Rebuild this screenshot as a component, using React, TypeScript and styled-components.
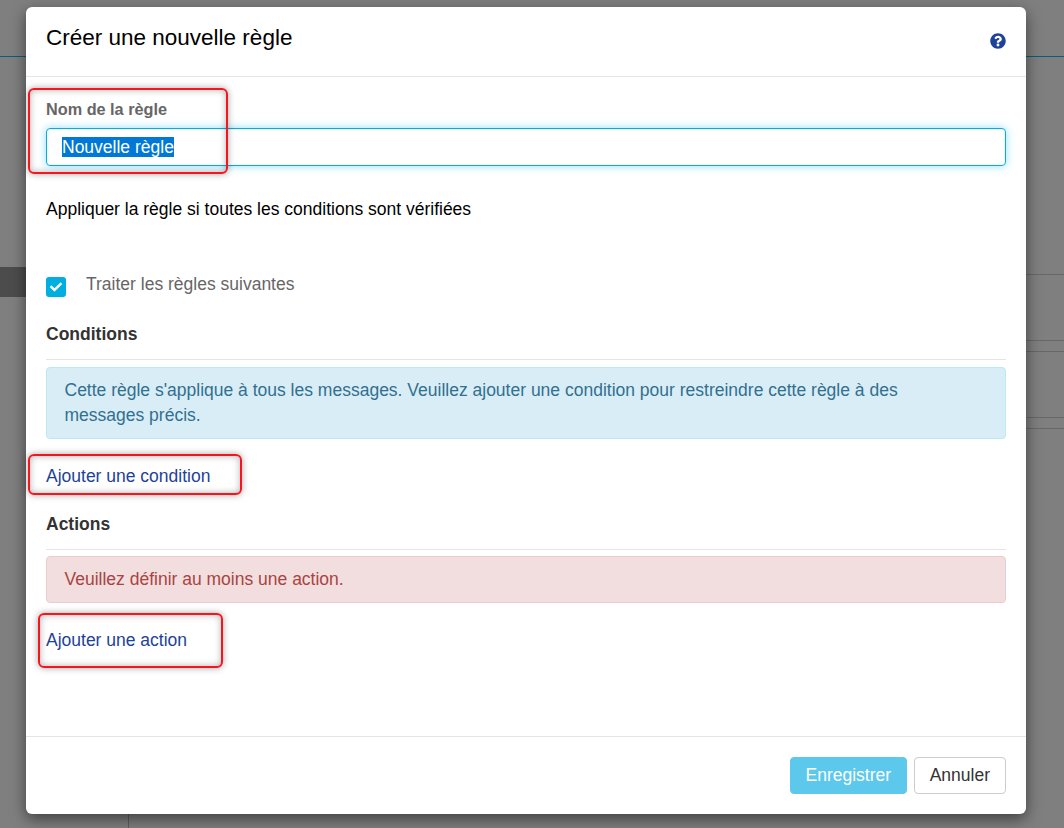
import React from "react";
import styled, { createGlobalStyle } from "styled-components";

const Global = createGlobalStyle`
  html, body { margin: 0; padding: 0; height: 100%; overflow: hidden; }
  body { font-family: "Liberation Sans", Arial, sans-serif; }
`;

const Page = styled.div`
  position: relative;
  width: 1064px;
  height: 828px;
  overflow: hidden;
  background: #7f7f7f;
`;

const TopBar = styled.div`
  height: 56px;
  border-bottom: 1px solid #04607c;
`;

const Columns = styled.div`
  display: flex;
  height: 771px;
`;

const SideNav = styled.div`
  width: 128px;
  flex: none;
  border-right: 1px solid #5e5e5e;
  padding-top: 210px;
`;

const ActiveNav = styled.div`
  height: 30px;
  background: #4c4c4c;
`;

const ListPane = styled.div`
  flex: 1;
  padding-top: 217px;
`;

const ListRow = styled.div<{ $h: number }>`
  height: ${(p) => p.$h}px;
  box-sizing: border-box;
  border-top: 1px solid #686868;
`;

const Modal = styled.div`
  position: absolute;
  left: 26px;
  top: 7px;
  width: 1000px;
  height: 807px;
  display: flex;
  flex-direction: column;
  background: #fff;
  border-radius: 6px;
  box-shadow: 0 5px 15px rgba(0, 0, 0, 0.5);
`;

const Header = styled.div`
  height: 70px;
  box-sizing: border-box;
  flex: none;
  display: flex;
  align-items: flex-start;
  justify-content: space-between;
  padding: 16px 20px 0;
  border-bottom: 1px solid #e5e5e5;
`;

const Title = styled.h4`
  margin: 0;
  font-size: 22.5px;
  font-weight: 400;
  line-height: 30px;
  color: #000;
`;

const HelpIcon = styled.svg`
  width: 16px;
  height: 16px;
  margin-top: 10px;
  fill: #1e4297;
`;

const Body = styled.div`
  flex: 1;
  padding: 23px 20px 0;
  display: flex;
  flex-direction: column;
  align-items: stretch;
`;

const FieldLabel = styled.label`
  font-size: 16.25px;
  font-weight: 700;
  line-height: 18px;
  color: #666;
  margin-bottom: 10px;
`;

const TextField = styled.div`
  height: 38px;
  box-sizing: border-box;
  padding: 0 15px;
  display: flex;
  align-items: center;
  border: 1px solid #00aee0;
  border-radius: 4px;
  box-shadow: inset 0 1px 1px rgba(0, 0, 0, 0.075), 0 0 8px rgba(102, 215, 250, 0.75);
  font-size: 17.5px;
  color: #555;
`;

const Selected = styled.span`
  background: #0078d7;
  color: #fff;
  line-height: 20px;
`;

const Sentence = styled.p`
  margin: 33px 0 0;
  font-size: 17.5px;
  line-height: 20px;
  color: #000;
`;

const CheckRow = styled.div`
  display: flex;
  align-items: center;
  gap: 20px;
  margin-top: 58px;
  height: 20px;
`;

const CheckBox = styled.span`
  width: 20px;
  height: 20px;
  flex: none;
  display: flex;
  align-items: center;
  justify-content: center;
  background: #00aee0;
  border-radius: 3px;
  svg { width: 12px; height: 12px; fill: #fff; }
`;

const CheckLabel = styled.span`
  font-size: 17.5px;
  line-height: 20px;
  color: #666;
  position: relative;
  top: -3px;
`;

const SectionTitle = styled.div<{ $top: number }>`
  margin-top: ${(p) => p.$top}px;
  padding-bottom: 15px;
  border-bottom: 1px solid #e5e5e5;
  font-size: 17.5px;
  font-weight: 700;
  line-height: 20px;
  color: #333;
`;

const Alert = styled.div<{ $tone: "info" | "danger"; $top: number }>`
  margin-top: ${(p) => p.$top}px;
  padding: 10px 44px 10px 17.5px;
  border: 1px solid ${(p) => (p.$tone === "info" ? "#bce8f1" : "#ebccd1")};
  border-radius: 4px;
  background: ${(p) => (p.$tone === "info" ? "#d9edf7" : "#f2dede")};
  color: ${(p) => (p.$tone === "info" ? "#31708f" : "#a94442")};
  font-size: 17.5px;
  line-height: 25px;
`;

const AddLink = styled.a<{ $top: number }>`
  display: block;
  margin-top: ${(p) => p.$top}px;
  font-size: 17.5px;
  line-height: 20px;
  color: #1e4297;
  text-decoration: none;
`;

const Footer = styled.div`
  height: 78px;
  box-sizing: border-box;
  flex: none;
  display: flex;
  justify-content: flex-end;
  gap: 7px;
  padding: 20px 20px 0;
  border-top: 1px solid #e5e5e5;
`;

const Button = styled.button<{ $primary?: boolean }>`
  height: 37px;
  box-sizing: border-box;
  padding: 0 ${(p) => (p.$primary ? "14.6px" : "15px")};
  font-family: inherit;
  font-size: 17.5px;
  border-radius: 4px;
  border: 1px solid ${(p) => (p.$primary ? "#5bc8ec" : "#ccc")};
  background: ${(p) => (p.$primary ? "#5bc8ec" : "#fff")};
  color: ${(p) => (p.$primary ? "#fff" : "#333")};
`;

const Callout = styled.div<{ $l: number; $t: number; $w: number; $h: number }>`
  position: absolute;
  left: ${(p) => p.$l}px;
  top: ${(p) => p.$t}px;
  width: ${(p) => p.$w}px;
  height: ${(p) => p.$h}px;
  box-sizing: border-box;
  border: 2px solid #f7141c;
  border-radius: 6px;
  box-shadow: 0 0 7px rgba(0, 0, 0, 0.35), inset 0 0 7px rgba(0, 0, 0, 0.3);
  pointer-events: none;
`;

export default function App() {
  return (
    <Page>
      <Global />
      <TopBar />
      <Columns>
        <SideNav>
          <ActiveNav />
        </SideNav>
        <ListPane>
          <ListRow $h={66} />
          <ListRow $h={11} />
          <ListRow $h={66} />
          <ListRow $h={11} />
          <ListRow $h={66} />
        </ListPane>
      </Columns>
      <Modal>
        <Header>
          <Title>Créer une nouvelle règle</Title>
          <HelpIcon viewBox="0 0 512 512">
            <path d="M504 256c0 137-111 248-248 248S8 393 8 256 119 8 256 8s248 111 248 248zM262.700 90c-54.500 0-89.300 23-116.600 63.800-3.500 5.300-2.400 12.400 2.700 16.300l34.700 26.300c5.200 3.900 12.600 3 16.700-2.100 17.900-22.700 30.100-35.800 57.300-35.800 20.400 0 45.700 13.100 45.700 32.900 0 15-12.400 22.700-32.500 34-23.500 13.200-54.600 29.600-54.600 70.600V300c0 6.600 5.400 12 12 12h56c6.600 0 12-5.400 12-12v-1.300c0-28.400 83-29.600 83-106.700 0-58-60.200-102-116.400-102zM256 338c-25.400 0-46 20.600-46 46 0 25.400 20.600 46 46 46s46-20.600 46-46c0-25.400-20.600-46-46-46z" />
          </HelpIcon>
        </Header>
        <Body>
          <FieldLabel>Nom de la règle</FieldLabel>
          <TextField>
            <Selected>Nouvelle règle</Selected>
          </TextField>
          <Sentence>Appliquer la règle si toutes les conditions sont vérifiées</Sentence>
          <CheckRow>
            <CheckBox>
              <svg viewBox="0 0 512 512">
                <path d="M173.900 439.400l-166.400-166.400c-10-10-10-26.200 0-36.200l36.200-36.200c10-10 26.200-10 36.200 0L192 312.700 432.100 72.600c10-10 26.200-10 36.200 0l36.200 36.200c10 10 10 26.200 0 36.200l-294.400 294.400c-10 10-26.200 10-36.200 0z" />
              </svg>
            </CheckBox>
            <CheckLabel>Traiter les règles suivantes</CheckLabel>
          </CheckRow>
          <SectionTitle $top={27}>Conditions</SectionTitle>
          <Alert $tone="info" $top={7}>
            Cette règle s'applique à tous les messages. Veuillez ajouter une condition pour restreindre cette règle à des messages précis.
          </Alert>
          <AddLink $top={27}>Ajouter une condition</AddLink>
          <SectionTitle $top={28}>Actions</SectionTitle>
          <Alert $tone="danger" $top={6}>Veuillez définir au moins une action.</Alert>
          <AddLink $top={27}>Ajouter une action</AddLink>
        </Body>
        <Footer>
          <Button $primary>Enregistrer</Button>
          <Button>Annuler</Button>
        </Footer>
      </Modal>
      <Callout $l={28} $t={88} $w={200} $h={86} />
      <Callout $l={28} $t={454} $w={214} $h={41} />
      <Callout $l={38} $t={613} $w={185} $h={55} />
    </Page>
  );
}
